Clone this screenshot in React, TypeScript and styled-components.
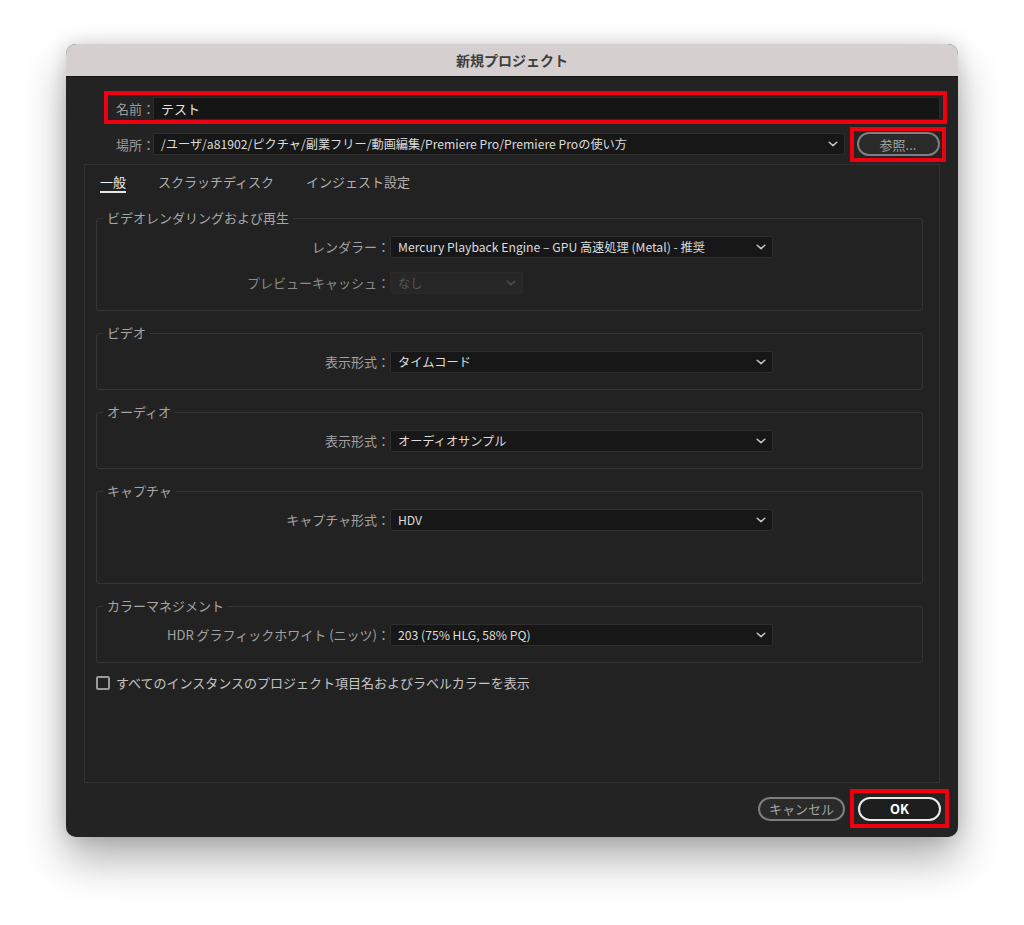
import styled, { createGlobalStyle } from 'styled-components';

const GlobalStyle = createGlobalStyle`
  html, body {
    margin: 0;
    background: #ffffff;
  }
  body {
    font-family: "Noto Sans CJK JP", "Noto Sans", sans-serif;
  }
`;

const Page = styled.div`
  box-sizing: border-box;
  height: 925px;
  padding: 44px 0 0 66px;
`;

const Window = styled.div`
  width: 892px;
  height: 793px;
  border-radius: 10px;
  overflow: hidden;
  background: #232323;
  display: flex;
  flex-direction: column;
  box-shadow: 0 22px 44px rgba(0, 0, 0, 0.32), 0 0 18px rgba(0, 0, 0, 0.14);
`;

const TitleBar = styled.div`
  box-sizing: border-box;
  height: 33px;
  flex: none;
  background: #d5d0cf;
  border-bottom: 1px solid #151515;
  display: flex;
  align-items: center;
  justify-content: center;
  color: #3e3e3e;
  font-size: 14px;
  font-weight: 700;
`;

const Content = styled.div`
  flex: 1;
  display: flex;
  flex-direction: column;
  padding: 0 18px;
  min-height: 0;
`;

const Highlight = styled.div`
  box-sizing: border-box;
  border: 4px solid #ee0010;
  display: flex;
  align-items: center;
`;

const NameRow = styled(Highlight)`
  height: 33px;
  margin: 14px -7px 0 20px;
  padding: 1px 3px 0 8px;
`;

const LocationRow = styled.div`
  height: 34px;
  margin: 3px -6px 0 32px;
  display: flex;
  align-items: center;
`;

const FieldLabel = styled.span`
  flex: none;
  width: 37px;
  white-space: nowrap;
  color: #9c9c9c;
  font-size: 13px;
`;

const TextInput = styled.div`
  box-sizing: border-box;
  flex: 1;
  height: 23px;
  background: #151515;
  border: 1px solid #2b2b2b;
  border-radius: 2px;
  padding-left: 7px;
  display: flex;
  align-items: center;
  color: #e2e2e2;
  font-size: 13px;
`;

const Select = styled.div<{ $width?: number; $disabled?: boolean }>`
  box-sizing: border-box;
  flex: ${p => (p.$width ? 'none' : '1')};
  width: ${p => (p.$width ? `${p.$width}px` : 'auto')};
  height: 22px;
  background: ${p => (p.$disabled ? '#272727' : '#171717')};
  border: 1px solid ${p => (p.$disabled ? '#2a2a2a' : '#2e2e2e')};
  border-radius: 2px;
  padding: 0 6px 0 7px;
  display: flex;
  align-items: center;
  justify-content: space-between;
  color: ${p => (p.$disabled ? '#565656' : '#dcdcdc')};
  font-size: 12.2px;
  white-space: nowrap;
`;

const Chevron = ({ dim }: { dim?: boolean }) => (
  <svg width="10" height="6" viewBox="0 0 10 6">
    <polyline
      points="1.2 1.2 5 4.6 8.8 1.2"
      fill="none"
      stroke={dim ? '#4e4e4e' : '#c4c4c4'}
      strokeWidth="1.5"
      strokeLinecap="round"
      strokeLinejoin="round"
    />
  </svg>
);

const BrowseBox = styled(Highlight)`
  flex: none;
  width: 96px;
  height: 35px;
  margin-left: 5px;
  justify-content: center;
`;

const PillButton = styled.button<{ $primary?: boolean; $width: number }>`
  box-sizing: border-box;
  width: ${p => p.$width}px;
  height: 24px;
  border-radius: 12px;
  border: 2px solid ${p => (p.$primary ? '#ececec' : '#7e7e7e')};
  background: ${p => (p.$primary ? '#1e1e1e' : '#2a2a2a')};
  color: ${p => (p.$primary ? '#ffffff' : '#a4a4a4')};
  font-family: inherit;
  font-size: 13px;
  font-weight: ${p => (p.$primary ? 700 : 400)};
  padding: 0;
  display: flex;
  align-items: center;
  justify-content: center;
`;

const Panel = styled.div`
  flex: 1;
  margin-top: 3px;
  border: 1px solid #313131;
  background: #222222;
  padding: 0 16px 0 11px;
  display: flex;
  flex-direction: column;
`;

const TabBar = styled.div`
  display: flex;
  gap: 32px;
  padding: 8px 0 0 4px;
`;

const Tab = styled.span<{ $active?: boolean }>`
  line-height: 18px;
  font-size: 13px;
  color: ${p => (p.$active ? '#f2f2f2' : '#b0b0b0')};
  border-bottom: 2px solid ${p => (p.$active ? '#e6e6e6' : 'transparent')};
`;

const Group = styled.fieldset<{ $extra?: number }>`
  margin: 13px 0 0;
  padding: 8px 0 ${p => 16 + (p.$extra ?? 0)}px 0;
  border: 1px solid #363636;
  border-radius: 3px;
  display: flex;
  flex-direction: column;
  gap: 13px;

  &:first-of-type {
    margin-top: 16px;
  }
`;

const Legend = styled.legend`
  margin-left: 6px;
  padding: 0 4px;
  line-height: 18px;
  font-size: 13px;
  color: #a6a6a6;
`;

const Row = styled.div`
  display: flex;
  align-items: center;
  height: 23px;
`;

const RowLabel = styled.span<{ $dim?: boolean }>`
  flex: none;
  width: 293px;
  text-align: right;
  white-space: nowrap;
  font-size: 13px;
  color: ${p => (p.$dim ? '#8a8a8a' : '#a2a2a2')};
`;

const CheckRow = styled.label`
  display: flex;
  align-items: center;
  gap: 6px;
  margin-top: 13px;
  height: 14px;
  line-height: 14px;
  color: #c4c4c4;
  font-size: 13px;
`;

const CheckBox = styled.span`
  box-sizing: border-box;
  width: 14px;
  height: 14px;
  border: 2px solid #9a9a9a;
  border-radius: 2px;
`;

const Footer = styled.div`
  flex: none;
  height: 54px;
  box-sizing: border-box;
  padding: 0 9px 3px 0;
  display: flex;
  align-items: center;
  justify-content: flex-end;
  gap: 5px;
`;

const OkBox = styled(Highlight)`
  width: 99px;
  height: 39px;
  justify-content: center;
`;

type Field = { label: string; value: string; width: number; disabled?: boolean };
type Section = { title: string; fields: Field[]; extra?: number };

const sections: Section[] = [
  {
    title: 'ビデオレンダリングおよび再生',
    fields: [
      { label: 'レンダラー：', value: 'Mercury Playback Engine – GPU 高速処理 (Metal) - 推奨', width: 383 },
      { label: 'プレビューキャッシュ：', value: 'なし', width: 133, disabled: true },
    ],
  },
  { title: 'ビデオ', fields: [{ label: '表示形式：', value: 'タイムコード', width: 383 }] },
  { title: 'オーディオ', fields: [{ label: '表示形式：', value: 'オーディオサンプル', width: 383 }] },
  { title: 'キャプチャ', fields: [{ label: 'キャプチャ形式：', value: 'HDV', width: 383 }], extra: 36 },
  {
    title: 'カラーマネジメント',
    fields: [{ label: 'HDR グラフィックホワイト (ニッツ)：', value: '203 (75% HLG, 58% PQ)', width: 383 }],
  },
];

export default function App() {
  return (
    <Page>
      <GlobalStyle />
      <Window>
        <TitleBar>新規プロジェクト</TitleBar>
        <Content>
          <NameRow>
            <FieldLabel>名前：</FieldLabel>
            <TextInput>テスト</TextInput>
          </NameRow>
          <LocationRow>
            <FieldLabel>場所：</FieldLabel>
            <Select>
              <span>/ユーザ/a81902/ピクチャ/副業フリー/動画編集/Premiere Pro/Premiere Proの使い方</span>
              <Chevron />
            </Select>
            <BrowseBox>
              <PillButton $width={83}>参照...</PillButton>
            </BrowseBox>
          </LocationRow>
          <Panel>
            <TabBar>
              <Tab $active>一般</Tab>
              <Tab>スクラッチディスク</Tab>
              <Tab>インジェスト設定</Tab>
            </TabBar>
            {sections.map(section => (
              <Group key={section.title} $extra={section.extra}>
                <Legend>{section.title}</Legend>
                {section.fields.map(field => (
                  <Row key={field.label}>
                    <RowLabel $dim={field.disabled}>{field.label}</RowLabel>
                    <Select $width={field.width} $disabled={field.disabled}>
                      <span>{field.value}</span>
                      <Chevron dim={field.disabled} />
                    </Select>
                  </Row>
                ))}
              </Group>
            ))}
            <CheckRow>
              <CheckBox />
              すべてのインスタンスのプロジェクト項目名およびラベルカラーを表示
            </CheckRow>
          </Panel>
        </Content>
        <Footer>
          <PillButton $width={87}>キャンセル</PillButton>
          <OkBox>
            <PillButton $primary $width={83}>OK</PillButton>
          </OkBox>
        </Footer>
      </Window>
    </Page>
  );
}
